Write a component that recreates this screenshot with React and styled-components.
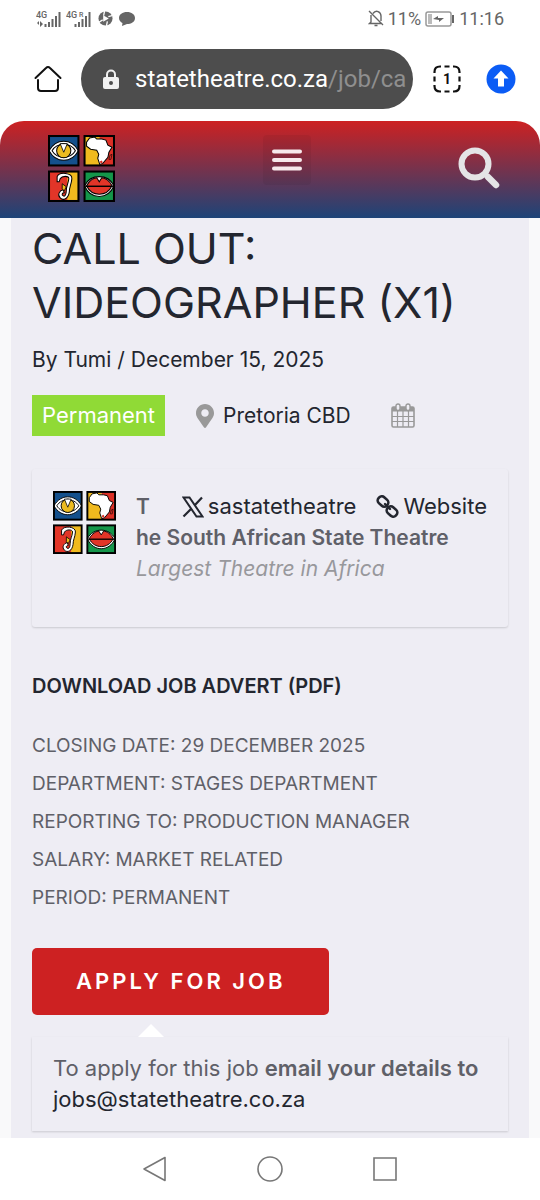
import React from "react";
import styled, { createGlobalStyle } from "styled-components";
import { FaMapMarkerAlt } from "react-icons/fa";

const details = [
  "CLOSING DATE: 29 DECEMBER 2025",
  "DEPARTMENT: STAGES DEPARTMENT",
  "REPORTING TO: PRODUCTION MANAGER",
  "SALARY: MARKET RELATED",
  "PERIOD: PERMANENT",
];

const TheatreLogo = ({ size }) => (
  <svg width={size} height={size} viewBox="0 0 66 66" aria-label="State Theatre">
    {/* eye */}
    <rect x="1" y="1" width="29" height="29" fill="#14508c" />
    <path d="M1 15.500C8 3 23 3 30 15.500C23 28 8 28 1 15.500Z" fill="#fff" stroke="#000" />
    <path d="M4 15.500C9 7 22 7 27 15.500C22 24 9 24 4 15.500Z" fill="#fff" stroke="#000" />
    <circle cx="15.500" cy="15.500" r="7" fill="#ecbb20" stroke="#000" />
    <path d="M12 8.500L15.500 17L19 8.500Z" fill="#fff" stroke="#000" strokeWidth=".8" />
    <rect x="1" y="1" width="29" height="29" fill="none" stroke="#000" strokeWidth="2" />
    {/* africa */}
    <rect x="36" y="1" width="15" height="29" fill="#f0ba1e" />
    <rect x="51" y="1" width="14" height="29" fill="#dc3026" />
    <path
      d="M41 3L46 2L48 4L53 4L57 5L59 10L63 12L60 17L59 22L54 28L51 29L49 23L50 19L48 15L42 14L38 11L38 7Z"
      fill="#fff"
      stroke="#000"
    />
    <path d="M51 26L53 25L54 27L52 28Z" fill="#dc3026" />
    <path d="M61 20L63 19L62 24L60 24Z" fill="#dc3026" stroke="#000" strokeWidth=".6" />
    <rect x="36" y="1" width="29" height="29" fill="none" stroke="#000" strokeWidth="2" />
    {/* ear */}
    <rect x="1" y="36" width="19" height="29" fill="#e23528" />
    <rect x="19" y="36" width="11" height="29" fill="#f0ba1e" />
    <path
      d="M9 41C11 36 24 37 23.500 43C23 49 21 51 21 56C20 63 15 65 12 62C9 59 11 55 15 54L16 57C14 57 13 59 15 60C17 61 18 58 18 55C18 50 20 48 20.500 43C20.500 40 14 40 12 43L11 46L9 46Z"
      fill="#fff"
      stroke="#000"
    />
    <path d="M14 48L18 51L16 55L14 53Z" fill="#f0ba1e" stroke="#000" strokeWidth=".8" />
    <rect x="1" y="36" width="29" height="29" fill="none" stroke="#000" strokeWidth="2" />
    {/* lips */}
    <rect x="36" y="36" width="29" height="29" fill="#14964a" />
    <path d="M36 50C42 38 59 38 65 50C59 64 42 64 36 50Z" fill="#fff" stroke="#000" />
    <path d="M38 50C41 44 46 42 48 42L50.500 46L53 42C56 42 61 45 63 50C58 61 43 61 38 50Z" fill="#e23528" stroke="#000" />
    <path d="M37 50.500H64" stroke="#000" strokeWidth="1.400" />
    <rect x="36" y="36" width="29" height="29" fill="none" stroke="#000" strokeWidth="2" />
  </svg>
);

const SignalIcon = ({ children }) => (
  <svg width="26" height="18" viewBox="0 0 26 18" fill="#666">
    {children}
    <path d="M8.500 14h2v3h-2zM12 12h2v5h-2zM15.500 9h2v8h-2zM19 6h2v11h-2zM22.500 2h2v15h-2z" />
  </svg>
);

const CalendarIcon = () => (
  <svg width="24" height="26" viewBox="0 0 24 26" fill="none" stroke="#999">
    <rect x="1" y="4" width="22" height="20" rx="1.500" strokeWidth="1.600" />
    <path d="M1 4h22v4.500H1z" fill="#999" stroke="none" />
    <path d="M1 13.500h22M1 18.500h22M6.500 8v16M12 8v16M17.500 8v16" strokeWidth="1.200" />
    <rect x="5" y="1" width="4" height="6.500" rx="2" fill="#eeedf4" strokeWidth="1.400" />
    <rect x="15" y="1" width="4" height="6.500" rx="2" fill="#eeedf4" strokeWidth="1.400" />
  </svg>
);

const XIcon = () => (
  <svg width="22" height="22" viewBox="0 0 22 22" fill="none" stroke="#23262f">
    <path d="M20 1.500L12.500 9.500M9.500 12.500L1.500 20.500" strokeWidth="2.200" />
    <path d="M1.500 1.500H7.500L20.500 20.500H14.500Z" strokeWidth="2" />
  </svg>
);

const ChainIcon = () => (
  <svg width="23" height="23" viewBox="0 0 23 23" fill="none" stroke="#23262f" strokeWidth="2.600">
    <rect x="1.500" y="2.500" width="11" height="8" rx="3.500" transform="rotate(42 7 6.500)" />
    <rect x="10.500" y="12.500" width="11" height="8" rx="3.500" transform="rotate(42 16 16.500)" />
    <path d="M9 9L14 14" strokeWidth="2.400" strokeLinecap="round" />
  </svg>
);

const App = () => {
  return (
    <Page>
      <GlobalStyle />
      <StatusBar>
        <StatusGroup>
          <SignalIcon>
            <text x="0" y="8" fontSize="9" fontWeight="500">4G</text>
            <path d="M1 13l2-2v4zM4 11l3 3-3 3z" />
          </SignalIcon>
          <SignalIcon>
            <text x="0" y="8" fontSize="9" fontWeight="500">4G</text>
            <text x="13" y="7" fontSize="7" fontWeight="500">R</text>
          </SignalIcon>
          <svg className="round" width="15" height="15" viewBox="0 0 16 16">
            <circle cx="8" cy="8" r="7.500" fill="#666" />
            <path d="M7 0L6 5M15 5L11 6M1 12L5 9.500M10 11L9 16" stroke="#fff" strokeWidth="1.400" />
            <path d="M5.500 4.500L11.500 8L5.500 11.500Z" fill="#fff" />
          </svg>
          <svg className="round" width="16" height="16" viewBox="0 0 16 16" fill="#666">
            <path d="M8 1C12.500 1 16 3.500 16 7C16 11 12 13 8 13L3 15L3.500 12C1.500 11 0 9.500 0 7C0 3.500 3.500 1 8 1Z" />
          </svg>
        </StatusGroup>
        <StatusGroup>
          <svg width="16" height="17" viewBox="0 0 16 17" fill="none" stroke="#666" strokeWidth="1.400">
            <path d="M5 3.500C8-1 13 2 13 6V11M3 5V12L1.500 13.500H13M6.500 15.500H9.500M1 1L15 15" />
          </svg>
          <span className="battery">11%</span>
          <svg width="30" height="16" viewBox="0 0 30 16">
            <rect x="1" y="1" width="25" height="14" rx="2" fill="#fff" stroke="#999" strokeWidth="1.500" />
            <path d="M3 3h4v10H3z" fill="#bbb" />
            <path d="M8 8L13 5V7H19L14 11V9Z" fill="#666" />
            <path d="M28 4v8" stroke="#666" strokeWidth="2" />
          </svg>
          <span className="time">11:16</span>
        </StatusGroup>
      </StatusBar>

      <BrowserBar>
        <IconButton aria-label="Home">
          <svg width="28" height="28" viewBox="0 0 28 28" fill="none" stroke="#111" strokeWidth="2" strokeLinecap="round">
            <path d="M1.500 13L12 3Q14 1 16 3L26.500 13M4 15V23Q4 26 7 26H21Q24 26 24 23V15" />
          </svg>
        </IconButton>
        <AddressBar>
          <svg width="16" height="21" viewBox="0 0 16 21">
            <path d="M4 9V5.500a4 4 0 0 1 8 0V9" fill="none" stroke="#f1f1f1" strokeWidth="2" />
            <rect x="0" y="8" width="16" height="12" rx="2" fill="#f1f1f1" />
            <circle cx="8" cy="14" r="2" fill="#4d4d4d" />
          </svg>
          <span className="url">
            statetheatre.co.za<em>/job/ca</em>
          </span>
        </AddressBar>
        <IconButton aria-label="Tabs">
          <svg width="28" height="28" viewBox="0 0 28 28" fill="none" stroke="#111" strokeWidth="2.200">
            <path d="M1.500 8V7Q1.500 1.500 7 1.500H8M20 1.500H21Q26.500 1.500 26.500 7V8M26.500 20V21Q26.500 26.500 21 26.500H20M8 26.500H7Q1.500 26.500 1.500 21V20M11.500 1.500H16.500M11.500 26.500H16.500M1.500 11.500V16.500M26.500 11.500V16.500" />
            <text x="14" y="19" textAnchor="middle" fontSize="14" fontWeight="700" fill="#111" stroke="none">1</text>
          </svg>
        </IconButton>
        <IconButton aria-label="Update">
          <svg width="30" height="30" viewBox="0 0 30 30">
            <circle cx="15" cy="15" r="14.500" fill="#0b5cf5" />
            <path d="M15 6.500L22.500 14.500H18V22.500H12V14.500H7.500Z" fill="#fff" />
          </svg>
        </IconButton>
      </BrowserBar>

      <SiteHeader>
        <a href="#home" aria-label="Home page">
          <TheatreLogo size={67} />
        </a>
        <MenuButton aria-label="Menu">
          <svg width="30" height="22" viewBox="0 0 30 22" stroke="#f7e9ec" strokeWidth="4" strokeLinecap="round">
            <path d="M2 2.500H28M2 11H28M2 19.500H28" />
          </svg>
        </MenuButton>
        <IconButton aria-label="Search">
          <svg width="42" height="42" viewBox="0 0 42 42" fill="none" stroke="#e4e4e6">
            <circle cx="17" cy="17" r="13.500" strokeWidth="6" />
            <path d="M27 27L30 30" strokeWidth="4" />
            <path d="M30 30L38 38" strokeWidth="6.500" strokeLinecap="round" />
          </svg>
        </IconButton>
      </SiteHeader>

      <Article>
        <Title>CALL OUT: VIDEOGRAPHER (X1)</Title>
        <Byline>By Tumi / December 15, 2025</Byline>
        <Meta>
          <JobType>Permanent</JobType>
          <Location href="#pretoria">
            <FaMapMarkerAlt size={24} color="#999" />
            Pretoria CBD
          </Location>
          <CalendarIcon />
        </Meta>

        <Company>
          <TheatreLogo size={63} />
          <div className="company-info">
            <div className="company-top">
              <strong>T</strong>
              <CompanyLink href="#x">
                <XIcon />
                sastatetheatre
              </CompanyLink>
              <CompanyLink href="#website">
                <ChainIcon />
                Website
              </CompanyLink>
            </div>
            <strong>he South African State Theatre</strong>
            <p>Largest Theatre in Africa</p>
          </div>
        </Company>

        <Download href="#advert">DOWNLOAD JOB ADVERT (PDF)</Download>
        <Details>
          {details.map((line) => (
            <li key={line}>{line}</li>
          ))}
        </Details>

        <ApplyButton>APPLY FOR JOB</ApplyButton>
        <ApplyBox>
          To apply for this job <strong>email your details to</strong>{" "}
          <a href="mailto:jobs@statetheatre.co.za">jobs@statetheatre.co.za</a>
        </ApplyBox>
      </Article>

      <SystemNav>
        <IconButton aria-label="Back">
          <svg width="26" height="28" viewBox="0 0 26 28" fill="none" stroke="#777" strokeWidth="1.600" strokeLinejoin="round">
            <path d="M23 2.500V25.500L2 14Z" />
          </svg>
        </IconButton>
        <IconButton aria-label="Home screen">
          <svg width="28" height="28" viewBox="0 0 28 28" fill="none" stroke="#777" strokeWidth="1.600">
            <circle cx="14" cy="14" r="12" />
          </svg>
        </IconButton>
        <IconButton aria-label="Recent apps">
          <svg width="26" height="26" viewBox="0 0 26 26" fill="none" stroke="#777" strokeWidth="1.600">
            <path d="M2 2H24V24H2Z" />
          </svg>
        </IconButton>
      </SystemNav>
    </Page>
  );
};

const GlobalStyle = createGlobalStyle`
  * {
    box-sizing: border-box;
    margin: 0;
    padding: 0;
  }

  body {
    background: #fff;
    font-family: Inter, "Open Sans", sans-serif;
    font-size: 21px;
    line-height: 31px;
    color: #5f6068;
  }

  a {
    color: #23262f;
    text-decoration: none;
  }

  svg {
    display: block;
    flex-shrink: 0;
  }

  strong {
    font-weight: 600;
  }
`;

const Page = styled.div`
  display: flex;
  flex-direction: column;
  min-height: 100vh;
`;

const StatusBar = styled.div`
  display: flex;
  justify-content: space-between;
  align-items: center;
  height: 37px;
  padding: 0 36px;
  font-family: Roboto, sans-serif;
  font-size: 18px;
  color: #666;
`;

const StatusGroup = styled.div`
  display: flex;
  align-items: center;
  gap: 4px;

  .round {
    margin-left: 2px;
  }
`;

const BrowserBar = styled.div`
  display: flex;
  align-items: center;
  height: 84px;
  padding: 0 24px 0 34px;
  gap: 19px;
  font-family: Roboto, sans-serif;
`;

const IconButton = styled.button`
  border: none;
  background: none;
  cursor: pointer;
  font-family: inherit;
`;

const AddressBar = styled.div`
  display: flex;
  flex: 1;
  align-items: center;
  gap: 16px;
  height: 60px;
  margin-right: 1px;
  padding: 0 4px 0 22px;
  border-radius: 30px;
  background: #4d4d4d;

  & + ${IconButton} {
    margin-right: 6px;
  }

  .url {
    font-size: 24px;
    color: #fff;
    white-space: nowrap;
  }

  em {
    font-style: normal;
    color: #8f8f8f;
  }
`;

const SiteHeader = styled.header`
  display: flex;
  align-items: flex-start;
  justify-content: space-between;
  height: 97px;
  padding: 14px 40px 0 48px;
  border-radius: 24px 24px 0 0;
  background: linear-gradient(#cd2122, #1d4478);

  ${IconButton} {
    margin-top: 12px;
  }
`;

const MenuButton = styled.button`
  padding: 14px 9px;
  border: none;
  border-radius: 4px;
  background: rgba(0, 0, 0, 0.05);
`;

const Article = styled.main`
  flex: 1;
  padding: 3px 21px 6px;
  border: solid #f9f9fa;
  border-width: 0 11px;
  background: #eeedf4;
`;

const Title = styled.h1`
  font-size: 43px;
  font-weight: 400;
  line-height: 54px;
  color: #23262f;
`;

const Byline = styled.p`
  margin-top: 15px;
  color: #23262f;
`;

const Meta = styled.div`
  display: flex;
  align-items: center;
  margin-top: 20px;
`;

const JobType = styled.span`
  padding: 5px 10px;
  background: #90da36;
  color: #fff;
  font-size: 22px;
`;

const Location = styled.a`
  display: flex;
  align-items: center;
  gap: 6px;
  margin: 0 40px 0 28px;
`;

const Company = styled.section`
  display: flex;
  gap: 20px;
  margin-top: 33px;
  padding: 22px 21px 43px;
  border-radius: 3px;
  box-shadow: 0 1px 2px rgba(0, 0, 0, 0.15);

  .company-info {
    flex: 1;
  }

  .company-top {
    display: flex;
    gap: 20px;

    strong {
      margin-right: auto;
    }
  }

  p {
    font-style: italic;
    color: #98989c;
  }
`;

const CompanyLink = styled.a`
  display: flex;
  align-items: center;
  gap: 4px;
  font-size: 22px;
`;

const Download = styled.a`
  display: block;
  margin-top: 44px;
  font-size: 20px;
  font-weight: 600;
`;

const Details = styled.ul`
  margin-top: 25px;
  list-style: none;
  font-size: 19px;
  line-height: 38px;
`;

const ApplyButton = styled.button`
  display: block;
  margin-top: 31px;
  padding: 18px 44px;
  border: none;
  border-radius: 5px;
  background: #cd2122;
  color: #fff;
  font: inherit;
  font-size: 22px;
  font-weight: 600;
  letter-spacing: 3px;
`;

const ApplyBox = styled.div`
  position: relative;
  margin-top: 22px;
  padding: 16px 21px;
  box-shadow: 0 1px 2px rgba(0, 0, 0, 0.15);
  font-size: 22px;

  &::before {
    content: "";
    position: absolute;
    left: 106px;
    bottom: 100%;
    border: 13px solid transparent;
    border-top: none;
    border-bottom-color: #fff;
  }

  a {
    display: block;
  }
`;

const SystemNav = styled.nav`
  display: flex;
  align-items: center;
  justify-content: center;
  gap: 88px;
  height: 62px;
`;

export default App;
